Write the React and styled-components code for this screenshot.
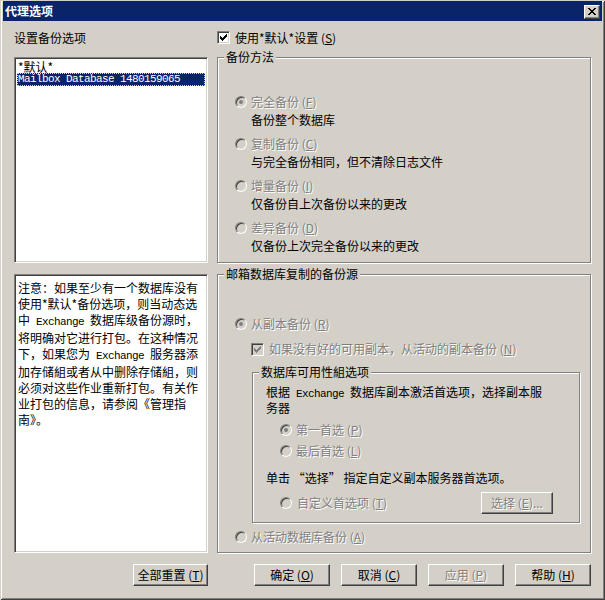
import React from "react";
import styled, { createGlobalStyle } from "styled-components";

const GlobalStyle = createGlobalStyle`
  body {
    margin: 0;
    background: #d4d0c8;
    font-family: "Noto Sans CJK SC", "Noto Sans", sans-serif;
    font-size: 12px;
    color: #000;
  }
`;

const Window = styled.div`
  width: 605px;
  height: 600px;
  box-sizing: border-box;
  padding: 1px 3px 3px 3px;
  background: #d4d0c8;
  box-shadow: inset 1px 1px #d4d0c8, inset -1px -1px #404040, inset 2px 2px #fff,
    inset -2px -2px #808080;
  display: flex;
  flex-direction: column;
`;

const TitleBar = styled.div`
  height: 20px;
  background: #0a246a;
  display: flex;
  align-items: center;
  justify-content: space-between;
  padding: 0 2px;
`;

const TitleText = styled.span`
  color: #fff;
  font-weight: bold;
  line-height: 20px;
`;

const CloseButton = styled.div`
  width: 16px;
  height: 14px;
  box-sizing: border-box;
  background: #d4d0c8;
  border: 1px solid;
  border-color: #fff #404040 #404040 #fff;
  box-shadow: inset -1px -1px #808080;
  display: flex;
  align-items: center;
  justify-content: center;
  margin-top: 1px;
`;

const Content = styled.div`
  display: grid;
  grid-template-columns: 194px 374px;
  grid-template-rows: 17px 206px 279px 22px;
  column-gap: 9px;
  row-gap: 11px;
  padding: 8px 0 0 11px;
`;

const Label = styled.div`
  display: flex;
  align-items: center;
  gap: ${(p) => p.$gap || 0}px;
  line-height: 14px;
  white-space: nowrap;
`;

const Sunken = styled.div`
  box-sizing: border-box;
  background: #fff;
  border: 1px solid;
  border-color: #808080 #fff #fff #808080;
  box-shadow: inset 1px 1px #404040, inset -1px -1px #d4d0c8;
  padding: 2px 2px;
`;

const ListRow = styled.div`
  height: 13px;
  display: flex;
  align-items: center;
  padding-left: 1px;
  white-space: nowrap;
  line-height: 13px;
  color: ${(p) => (p.$selected ? "#fff" : "#000")};
  background: ${(p) => (p.$selected ? "#0a246a" : "transparent")};
  outline: ${(p) => (p.$selected ? "1px dotted #e6d48c" : "none")};
  outline-offset: -1px;
`;

const Mono = styled.span`
  font-family: "Liberation Mono", monospace;
  font-size: 11px;
  letter-spacing: -0.6px;
`;

const NoteText = styled.div`
  padding: 3px 0 0 1px;
  line-height: 16px;
  white-space: nowrap;
`;

const Group = styled.div`
  position: relative;
  box-sizing: border-box;
  border: 1px solid #808080;
  box-shadow: inset 1px 1px #fff, 1px 1px #fff;
  display: flex;
  flex-direction: column;
  padding: ${(p) => p.$pad};
  margin: ${(p) => p.$margin || 0};
  width: ${(p) => (p.$width ? `${p.$width}px` : "auto")};
`;

const Legend = styled.span`
  position: absolute;
  top: -8px;
  left: 6px;
  padding: 0 2px;
  background: #d4d0c8;
  line-height: 14px;
  white-space: nowrap;
`;

const OptionBlock = styled.div`
  display: flex;
  flex-direction: column;
  margin-top: ${(p) => p.$mt || 0}px;
`;

const Row = styled.div`
  display: flex;
  align-items: center;
  height: ${(p) => p.$h || 18}px;
  gap: ${(p) => p.$gap || 4}px;
  margin-top: ${(p) => p.$mt || 0}px;
  padding-left: ${(p) => p.$pl || 0}px;
  padding-right: ${(p) => p.$pr || 0}px;
  justify-content: ${(p) => (p.$spread ? "space-between" : "flex-start")};
  white-space: nowrap;
`;

const Desc = styled.div`
  line-height: 18px;
  padding-left: 16px;
  white-space: nowrap;
`;

const Para = styled.div`
  line-height: ${(p) => p.$lh || 14}px;
  margin-top: ${(p) => p.$mt || 0}px;
  white-space: nowrap;
`;

const Text = styled.span`
  color: ${(p) => (p.$disabled ? "#808080" : "#000")};
  text-shadow: ${(p) => (p.$disabled ? "1px 1px 0 #fff" : "none")};
  line-height: 14px;
`;

const RadioCircle = styled.span`
  position: relative;
  flex: none;
  width: 12px;
  height: 12px;
  box-sizing: border-box;
  border-radius: 50%;
  border: 1px solid;
  border-color: #808080 #fff #fff #808080;
  box-shadow: inset 1px 1px #404040, inset -1px -1px #d4d0c8;
  background: ${(p) => (p.$disabled ? "#d4d0c8" : "#fff")};
  &::after {
    content: "";
    display: ${(p) => (p.$checked ? "block" : "none")};
    position: absolute;
    left: 3px;
    top: 3px;
    width: 4px;
    height: 4px;
    border-radius: 50%;
    background: ${(p) => (p.$disabled ? "#808080" : "#000")};
  }
`;

const CheckBox = styled.span`
  flex: none;
  width: 13px;
  height: 13px;
  box-sizing: border-box;
  border: 1px solid;
  border-color: #808080 #fff #fff #808080;
  box-shadow: inset 1px 1px #404040, inset -1px -1px #d4d0c8;
  background: ${(p) => (p.$disabled ? "#d4d0c8" : "#fff")};
  display: flex;
  align-items: center;
  justify-content: center;
`;

const Button = styled.button`
  flex: none;
  width: ${(p) => p.$w}px;
  height: 22px;
  box-sizing: border-box;
  padding: 0;
  background: #d4d0c8;
  border: 1px solid;
  border-color: #fff #404040 #404040 #fff;
  box-shadow: inset -1px -1px #808080;
  font: inherit;
  color: ${(p) => (p.$disabled ? "#808080" : "#000")};
  text-shadow: ${(p) => (p.$disabled ? "1px 1px 0 #fff" : "none")};
  line-height: 14px;
  white-space: nowrap;
`;

const ButtonRow = styled.div`
  display: flex;
  justify-content: flex-end;
  gap: 11px;
`;

const checkPixels = [
  [0, 2], [1, 3], [2, 4], [3, 3], [4, 2], [5, 1], [6, 0],
];

const CheckMark = ({ color }) => (
  <svg width="7" height="7" viewBox="0 0 7 7" shapeRendering="crispEdges">
    {checkPixels.map(([x, y]) => (
      <rect key={x} x={x} y={y} width="1" height="3" fill={color} />
    ))}
  </svg>
);

const CloseGlyph = () => (
  <svg width="8" height="7" viewBox="0 0 8 7" shapeRendering="crispEdges">
    <path
      d="M0 0h2v1h-2zM6 0h2v1h-2zM1 1h2v1h-2zM5 1h2v1h-2zM2 2h4v1h-4zM3 3h2v1h-2zM2 4h4v1h-4zM1 5h2v1h-2zM5 5h2v1h-2zM0 6h2v1h-2zM6 6h2v1h-2z"
      fill="#000"
    />
  </svg>
);

const Radio = ({ checked, label, mnemonic, disabled = true, ...rest }) => (
  <Row {...rest}>
    <RadioCircle $checked={checked} $disabled={disabled} />
    <Text $disabled={disabled}>
      {label} (<u>{mnemonic}</u>)
    </Text>
  </Row>
);

const Check = ({ disabled, children, ...rest }) => (
  <Row $gap={5} {...rest}>
    <CheckBox $disabled={disabled}>
      <CheckMark color={disabled ? "#808080" : "#000"} />
    </CheckBox>
    <Text $disabled={disabled}>{children}</Text>
  </Row>
);

const methods = [
  { label: "完全备份", key: "F", desc: "备份整个数据库", checked: true },
  { label: "复制备份", key: "C", desc: "与完全备份相同，但不清除日志文件" },
  { label: "增量备份", key: "I", desc: "仅备份自上次备份以来的更改" },
  { label: "差异备份", key: "D", desc: "仅备份上次完全备份以来的更改" },
];

export default function App() {
  return (
    <>
      <GlobalStyle />
      <Window>
        <TitleBar>
          <TitleText>代理选项</TitleText>
          <CloseButton>
            <CloseGlyph />
          </CloseButton>
        </TitleBar>

        <Content>
          <Label>设置备份选项</Label>
          <Label>
            <Check>
              使用*默认*设置 (<u>S</u>)
            </Check>
          </Label>

          <Sunken>
            <ListRow>*默认*</ListRow>
            <ListRow $selected>
              <Mono>Mailbox Database 1480159065</Mono>
            </ListRow>
          </Sunken>

          <Group $pad="35px 0 0 17px">
            <Legend>备份方法</Legend>
            {methods.map((m, i) => (
              <OptionBlock key={m.key} $mt={i ? 6 : 0}>
                <Radio checked={m.checked} label={m.label} mnemonic={m.key} />
                <Desc>{m.desc}</Desc>
              </OptionBlock>
            ))}
          </Group>

          <Sunken>
            <NoteText>
              注意：如果至少有一个数据库没有
              <br />
              使用*默认*备份选项，则当动态选
              <br />
              中<Mono> Exchange </Mono>数据库级备份源时，
              <br />
              将明确对它进行打包。在这种情况
              <br />
              下，如果您为<Mono> Exchange </Mono>服务器添
              <br />
              加存储組或者从中删除存储組，则
              <br />
              必须对这些作业重新打包。有关作
              <br />
              业打包的信息，请参阅《管理指
              <br />
              南》。
            </NoteText>
          </Sunken>

          <Group $pad="40px 0 0 17px">
            <Legend>邮箱数据库复制的备份源</Legend>
            <Radio checked label="从副本备份" mnemonic="R" />
            <Check disabled $mt={7} $pl={16}>
              如果没有好的可用副本，从活动的副本备份 (<u>N</u>)
            </Check>
            <Group $pad="12px 0 8px 13px" $margin="14px 0 0 17px" $width={328}>
              <Legend>数据库可用性組选项</Legend>
              <Para $lh={13}>
                根据<Mono> Exchange </Mono>数据库副本激活首选项，选择副本服
                <br />
                务器
              </Para>
              <Radio checked label="第一首选" mnemonic="P" $mt={7} $pl={14} />
              <Radio label="最后首选" mnemonic="L" $mt={3} $pl={14} />
              <Para $mt={11}>单击 “选择” 指定自定义副本服务器首选项。</Para>
              <Row $h={22} $mt={7} $pl={14} $pr={26} $spread>
                <Label $gap={5}>
                  <RadioCircle $disabled />
                  <Text $disabled>
                    自定义首选项 (<u>T</u>)
                  </Text>
                </Label>
                <Button $w={72} $disabled>
                  选择 (<u>E</u>)...
                </Button>
              </Row>
            </Group>
            <Radio label="从活动数据库备份" mnemonic="A" $mt={5} />
          </Group>

          <ButtonRow>
            <Button $w={75}>
              全部重置 (<u>T</u>)
            </Button>
          </ButtonRow>
          <ButtonRow>
            <Button $w={76}>
              确定 (<u>O</u>)
            </Button>
            <Button $w={76}>
              取消 (<u>C</u>)
            </Button>
            <Button $w={76} $disabled>
              应用 (<u>P</u>)
            </Button>
            <Button $w={76}>
              帮助 (<u>H</u>)
            </Button>
          </ButtonRow>
        </Content>
      </Window>
    </>
  );
}
